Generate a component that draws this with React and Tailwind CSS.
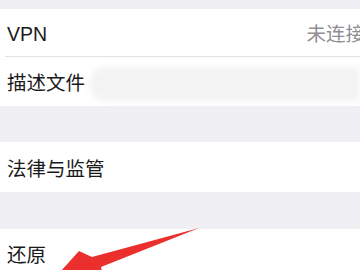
export default function App() {
  return (
    <div className="relative h-[270px] w-[360px] overflow-hidden bg-[#efeff4] text-[#1a1a1a] [font-family:'Liberation_Sans','Noto_Sans_CJK_SC',sans-serif]">
      <div className="h-[9px]" />
      <div className="bg-white">
        <div className="flex h-[47px] items-center overflow-hidden whitespace-nowrap pl-[7px] pt-[4px]">
          <span className="text-[19.5px]">VPN</span>
          <span className="ml-auto mr-[-5px] text-[19.5px] text-[#8e8e93]">未连接</span>
        </div>
        <div className="ml-[5px] h-px bg-[#e2e2e4]" />
        <div className="flex h-[49px] items-center pl-[7px] pt-[4px]">
          <span className="text-[19.5px]">描述文件</span>
          <div className="ml-[4px] h-[34px] flex-1 rounded-l-full bg-[#f3f3f4] blur-[3px]" />
        </div>
      </div>
      <div className="h-[36px]" />
      <div className="flex h-[50px] items-center bg-white pl-[7px] pt-[5px]">
        <span className="text-[19.5px]">法律与监管</span>
      </div>
      <div className="h-[37px]" />
      <div className="flex h-[50px] items-center bg-white pl-[7px] pt-[4px]">
        <span className="text-[19.5px]">还原</span>
      </div>
      <svg
        className="absolute left-0 top-0"
        width="360"
        height="270"
        viewBox="0 0 360 270"
      >
        <polygon
          points="199,228 92,257 79,251 52,281 105,287 101,267"
          fill="#ea2f2c"
        />
      </svg>
    </div>
  );
}
